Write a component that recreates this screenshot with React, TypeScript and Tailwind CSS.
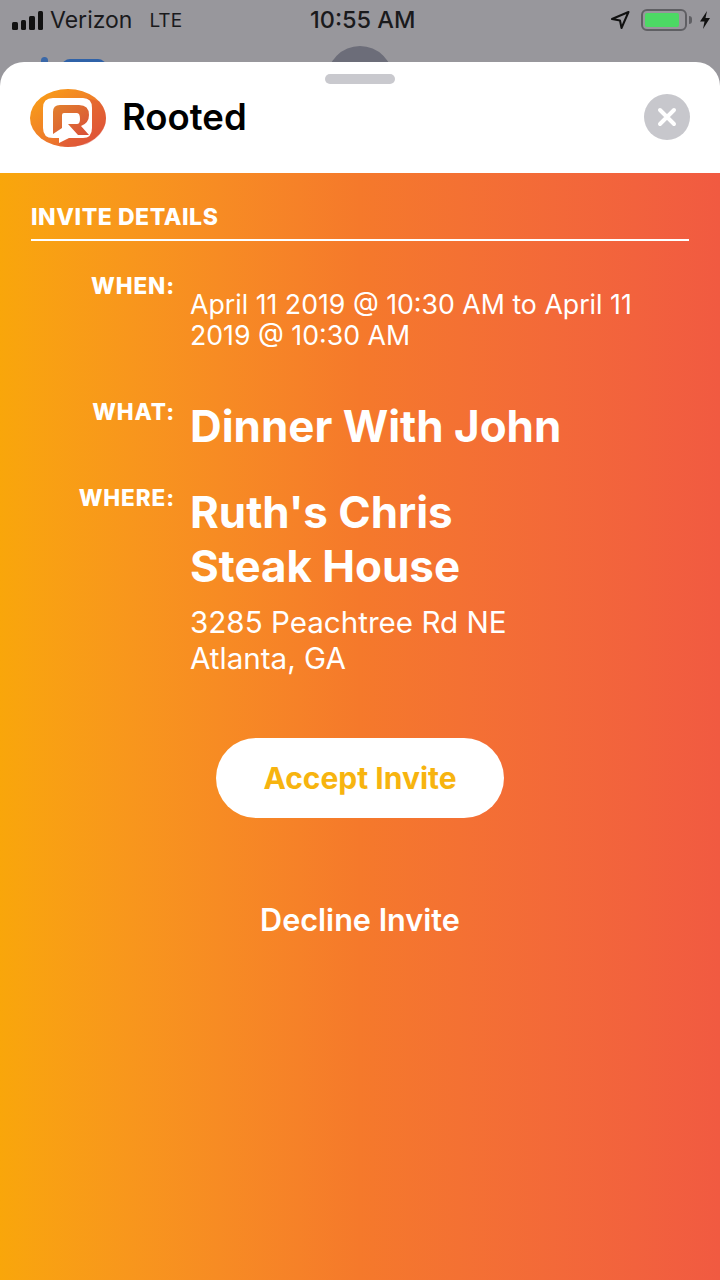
function StatusBar() {
  return (
    <div className="relative z-10 flex h-[40px] items-center justify-between pl-[12px] pr-[9px] text-[#1a1a1c]">
      <div className="flex items-center">
        <div className="flex items-end gap-[3px]">
          <div className="h-[8px] w-[5.5px] rounded-[1.5px] bg-[#111]" />
          <div className="h-[10px] w-[5.5px] rounded-[1.5px] bg-[#111]" />
          <div className="h-[14px] w-[5.5px] rounded-[1.5px] bg-[#111]" />
          <div className="h-[19px] w-[5.5px] rounded-[1.5px] bg-[#111]" />
        </div>
        <span className="ml-[7px] text-[23px] leading-none">Verizon</span>
        <span className="ml-[17px] text-[19px] leading-none">LTE</span>
      </div>
      <span className="absolute left-[310px] top-[7px] text-[23.5px] font-medium leading-[26px]">10:55 AM</span>
      <div className="flex items-center">
        <svg width="20" height="20" viewBox="0 0 20 20" className="mr-[11px]">
          <path d="M18.5 2 L2 9 L10 10.5 L11.5 18 Z" fill="none" stroke="#111" strokeWidth="2" strokeLinejoin="round" />
        </svg>
        <div className="flex h-[22px] w-[46px] items-center rounded-[6px] border-2 border-[#5f5f63] p-[2px]">
          <div className="h-full w-[34px] rounded-[2px] bg-[#4cd964]" />
        </div>
        <div className="ml-[2px] mr-[7px] h-[8px] w-[3px] rounded-r-[3px] bg-[#5f5f63]" />
        <svg width="12" height="20" viewBox="0 0 12 20">
          <path d="M8 1 L1 11.5 H5.5 L4 19 L11 8 H6.5 Z" fill="#111" />
        </svg>
      </div>
    </div>
  );
}

function Logo() {
  return (
    <svg width="78" height="60" viewBox="0 0 78 60">
      <defs>
        <linearGradient id="logo" x1="0" y1="0" x2="1" y2="1">
          <stop offset="0" stopColor="#fba414" />
          <stop offset="0.55" stopColor="#ee7b2a" />
          <stop offset="1" stopColor="#df4b3e" />
        </linearGradient>
        <linearGradient id="logoR" x1="0" y1="0" x2="1" y2="1">
          <stop offset="0" stopColor="#e2812c" />
          <stop offset="1" stopColor="#d9503a" />
        </linearGradient>
      </defs>
      <ellipse cx="39" cy="30" rx="38" ry="29" fill="url(#logo)" />
      {/* long shadow falling to the lower right of the frame */}
      <path d="M56 10 L70 13 Q77 21 77 30 Q77 46 58 56 Q48 59 36 59 L30 56 Z" fill="#d9503a" opacity="0.45" />
      <path
        d="M24 10 H54 Q63 10 63 20 V40 Q63 50 54 50 H40 L30 55 V50 H24 Q14 50 14 40 V20 Q14 10 24 10 Z"
        fill="#fff"
      />
      <path
        d="M24 46 V24 Q24 17 31 17 H50 Q60 17 60 27 Q60 35 52 38 L60 47 H49 L39 36 H48 Q51 36 51 31 Q51 25 48 25 H35 Q33 25 33 27 V40 Z"
        fill="url(#logoR)"
      />
    </svg>
  );
}

function DetailRow({ label, children }: { label: string; children: React.ReactNode }) {
  return (
    <div className="flex">
      <div className="w-[175px] shrink-0 text-right text-[22.5px] font-extrabold leading-[26px] tracking-[0.9px]">{label}</div>
      <div className="ml-[15px] min-w-0">{children}</div>
    </div>
  );
}

export default function App() {
  return (
    <div className="relative h-[1280px] w-[720px] overflow-hidden bg-[#98979c] font-['Inter',sans-serif]">
      <StatusBar />

      {/* app showing behind the sheet */}
      <div className="absolute left-[41px] top-[57px] h-[8px] w-[7px] rounded-t-[4px] bg-[#3a68a8]" />
      <div className="absolute left-[62px] top-[59px] h-[10px] w-[44px] rounded-t-[8px] bg-[#2f62a8]" />
      <div className="absolute left-[327px] top-[46px] h-[66px] w-[66px] rounded-full bg-[#6c6d79]" />

      <div className="absolute inset-x-0 bottom-0 top-[62px] flex flex-col overflow-hidden rounded-t-[24px] bg-white">
        <div className="relative flex h-[111px] shrink-0 items-center pl-[29px] pr-[30px]">
          <div className="absolute left-[325px] top-[12px] h-[10px] w-[70px] rounded-full bg-[#c9c9ce]" />
          <Logo />
          <span className="ml-[15px] text-[36.5px] font-semibold leading-none text-black">Rooted</span>
          <div className="mb-[1px] ml-auto flex h-[46px] w-[46px] items-center justify-center rounded-full bg-[#c7c7cc]">
            <svg width="20" height="20" viewBox="0 0 20 20">
              <path d="M3 3 L17 17 M17 3 L3 17" stroke="#fff" strokeWidth="4" strokeLinecap="round" />
            </svg>
          </div>
        </div>

        <div className="flex-1 bg-gradient-to-r from-[#f9a60a] via-[#f5792b] via-50% to-[#f15a41] text-white">
          <div className="mx-[31px] mt-[31px] border-b-2 border-white pb-[9px] text-[23px] font-extrabold leading-[26px] tracking-[0.55px]">
            INVITE DETAILS
          </div>

          <div className="mt-[32px] flex flex-col">
            <DetailRow label="WHEN:">
              <p className="mt-[16px] w-[470px] text-[26.7px] leading-[31px]">April 11 2019 @ 10:30 AM to April 11 2019 @ 10:30 AM</p>
            </DetailRow>
            <div className="mt-[48px]">
              <DetailRow label="WHAT:">
                <p className="text-[43.9px] font-bold leading-[54px]">Dinner With John</p>
              </DetailRow>
            </div>
            <div className="mt-[32px]">
              <DetailRow label="WHERE:">
                <p className="text-[43.9px] font-bold leading-[54px]">
                  Ruth's Chris
                  <br />
                  Steak House
                </p>
                <p className="mt-[11px] text-[29.6px] leading-[36px]">
                  3285 Peachtree Rd NE
                  <br />
                  Atlanta, GA
                </p>
              </DetailRow>
            </div>
          </div>

          <div className="mt-[62px] flex flex-col items-center">
            <div className="flex h-[80px] w-[288px] items-center justify-center rounded-full bg-white pt-[1px] text-[30px] font-bold text-[#f7b40f]">
              Accept Invite
            </div>
            <div className="mt-[84px] text-[30.6px] font-semibold leading-[36px]">Decline Invite</div>
          </div>
        </div>
      </div>
    </div>
  );
}
